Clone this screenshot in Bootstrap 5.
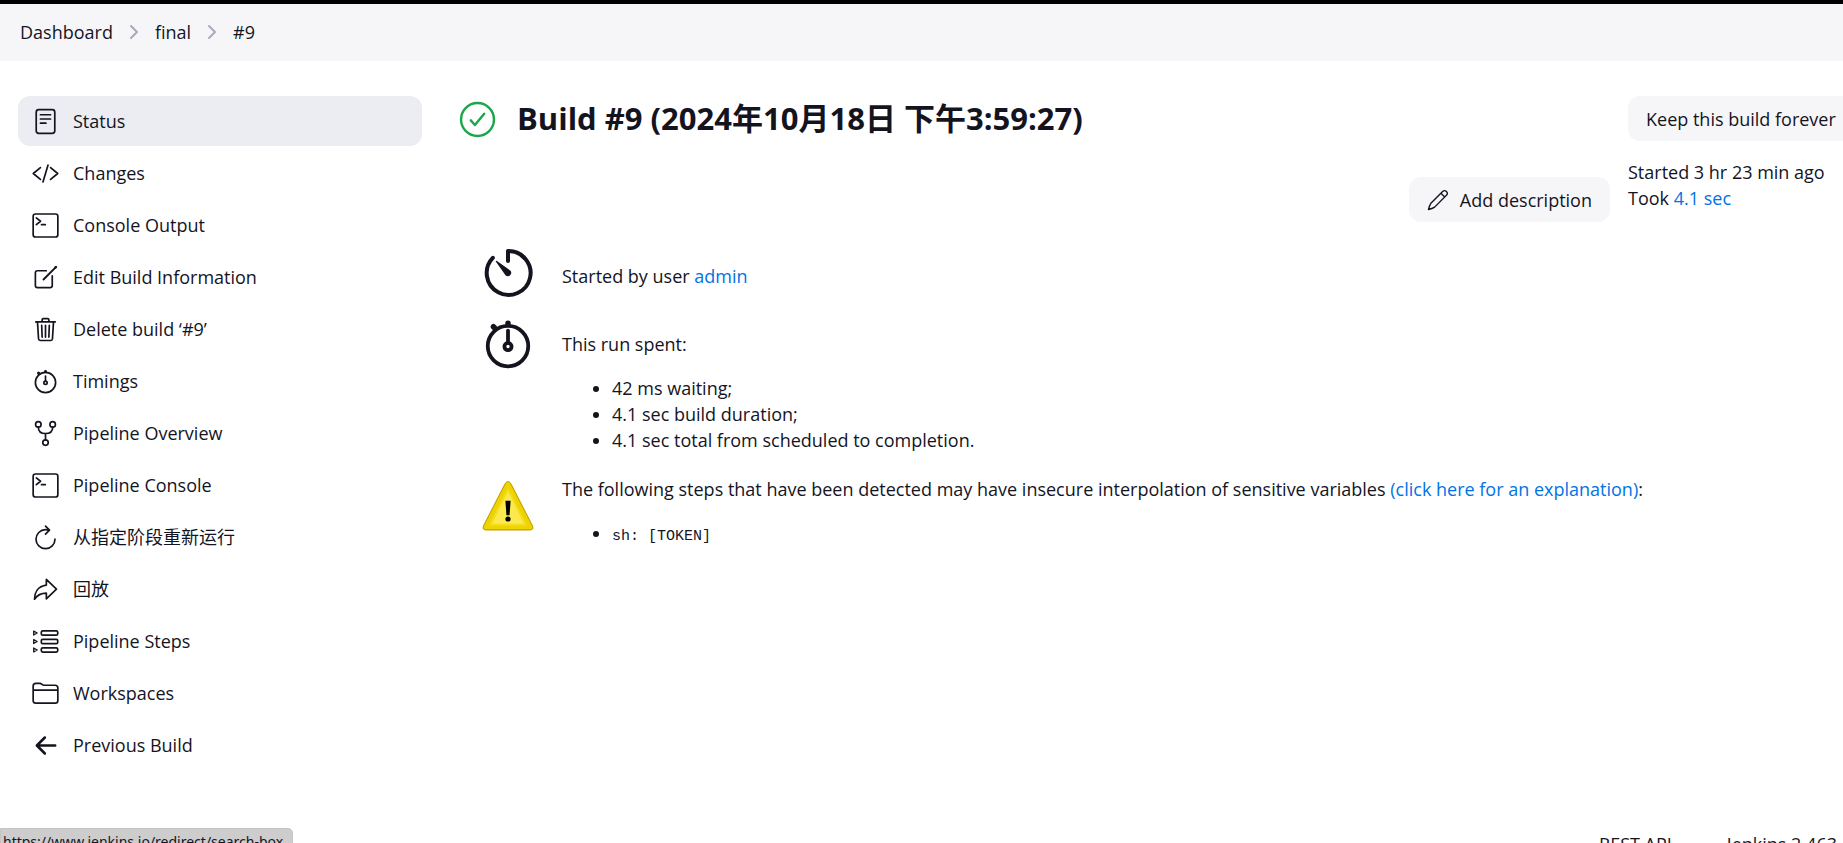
<!DOCTYPE html>
<html lang="en">
<head>
<meta charset="utf-8">
<meta name="viewport" content="width=device-width, initial-scale=1">
<title>final #9 - Jenkins</title>
<link href="https://cdn.jsdelivr.net/npm/bootstrap@5.3.0/dist/css/bootstrap.min.css" rel="stylesheet">
<style>
  :root { --ink: #14141f; --link: #0073e6; --soft: #f6f6f9; }
  body { font-family: "Open Sans", "Noto Sans CJK SC", sans-serif; font-size: 18px; line-height: 26px; color: var(--ink); }
  a { color: var(--link); text-decoration: none; }
  svg { fill: none; stroke: currentColor; stroke-width: 32; stroke-linecap: round; stroke-linejoin: round; flex: none; }
  .crumb-bar { background: var(--soft); border-top: 4px solid #000; height: 61px; padding: 0 20px 2px; }
  .crumb-bar ol { gap: 16px; }
  .crumb-bar a, .side-nav a, footer a { color: var(--ink); }
  .crumb-bar svg { width: 10px; height: 16px; color: #a9a9bb; stroke-width: 2; }
  .page-body { padding: 35px 0 0 18px; gap: 36px; }
  .side-nav { width: 404px; gap: 2px; }
  .side-nav a { height: 50px; padding: 0 14px; gap: 14px; border-radius: 12px; color: var(--ink); }
  .side-nav a.active { background: #ecedf3; }
  .side-nav svg { width: 27px; height: 27px; }
  .build-col { min-width: 0; }
  .build-head { gap: 20px; height: 46px; }
  .build-head svg { width: 39px; height: 39px; color: #1ea64b; }
  h1 { font-size: 31px; font-weight: 700; }
  .soft-btn { background: var(--soft); border: 0; border-radius: 12px; height: 45px; padding: 0 18px; font-size: 18px; color: var(--ink); gap: 11px; }
  .soft-btn svg { width: 22px; height: 22px; }
  .right-col { width: 215px; }
  .started { margin-top: 18px; }
  .desc-row { padding: 35px 18px 0 0; }
  .facts { padding-left: 23px; }
  .facts td { padding: 0; vertical-align: top; }
  .facts td:first-child { padding-right: 27px; }
  .facts svg { width: 54px; height: 54px; display: block; }
  .facts ul { padding-left: 50px; margin: 18px 0 0; }
  .fact-user td { padding-top: 24px; height: 89px; }
  .fact-user td + td { padding-top: 41px; }
  .fact-time td { padding-top: 6px; height: 164px; }
  .fact-time td + td { padding-top: 20px; }
  .fact-warn td { padding-top: 4px; }
  .fact-warn td + td { padding-top: 1px; }
  code { font: 15px/26px "Liberation Mono", monospace; color: var(--ink); }
  footer { padding: 61px 6px 0 0; gap: 55px; }
  .url-hint { bottom: -11px; height: 26px; padding: 0 9px 0 2px; background: #cdcdcd; border: 1px solid #c4c4c4; border-radius: 0 5px 0 0; font: 14px/26px "Noto Sans", sans-serif; }
</style>
</head>
<body class="vh-100 overflow-hidden bg-white">
<header class="crumb-bar d-flex align-items-center">
  <nav aria-label="breadcrumb">
    <ol class="list-unstyled d-flex align-items-center mb-0">
      <li><a href="#">Dashboard</a></li>
      <li class="d-flex" aria-hidden="true"><svg viewBox="0 0 10 16"><path d="M2 2l6 6-6 6"/></svg></li>
      <li><a href="#">final</a></li>
      <li class="d-flex" aria-hidden="true"><svg viewBox="0 0 10 16"><path d="M2 2l6 6-6 6"/></svg></li>
      <li><a href="#">#9</a></li>
    </ol>
  </nav>
</header>

<div class="page-body d-flex">
  <nav class="side-nav d-flex flex-column flex-shrink-0" aria-label="Build">
    <a class="active d-flex align-items-center" href="#"><svg viewBox="0 0 512 512"><rect x="80" y="32" width="352" height="448" rx="48"/><path d="M160 128h192M160 208h192M160 288h104"/></svg>Status</a>
    <a class="d-flex align-items-center" href="#"><svg viewBox="0 0 512 512"><path d="M160 368L24 256l136-112M352 368l136-112-136-112M304 96l-96 320"/></svg>Changes</a>
    <a class="d-flex align-items-center" href="#"><svg viewBox="0 0 512 512"><rect x="22" y="38" width="468" height="436" rx="44"/><path d="M82 112l80 64-80 64M180 240h72"/></svg>Console Output</a>
    <a class="d-flex align-items-center" href="#"><svg viewBox="0 0 512 512"><path d="M384 224v184a40 40 0 01-40 40H104a40 40 0 01-40-40V168a40 40 0 0140-40h167"/><path d="M448 64L218 294" stroke-width="36"/><path d="M446 66l8-8" stroke-width="46"/></svg>Edit Build Information</a>
    <a class="d-flex align-items-center" href="#"><svg viewBox="0 0 512 512"><path d="M104 112l20 320c1 18 14 32 32 32h200c18 0 31-14 32-32l20-320M72 112h368M192 112V72a24 24 0 0124-24h80a24 24 0 0124 24v40M256 176v224M184 176l8 224M328 176l-8 224"/></svg>Delete build ‘#9’</a>
    <a class="d-flex align-items-center" href="#"><svg viewBox="0 0 512 512"><circle cx="256" cy="276" r="192"/><circle cx="256" cy="280" r="32"/><path d="M256 152v96"/><path d="M256 66v4M124 98l4 4" stroke-width="56"/></svg>Timings</a>
    <a class="d-flex align-items-center" href="#"><svg viewBox="0 0 512 512"><circle cx="120" cy="84" r="52"/><circle cx="392" cy="84" r="52"/><circle cx="256" cy="428" r="52"/><path d="M256 256v120M120 136c0 80 54 120 136 120s136-40 136-120"/></svg>Pipeline Overview</a>
    <a class="d-flex align-items-center" href="#"><svg viewBox="0 0 512 512"><rect x="22" y="38" width="468" height="436" rx="44"/><path d="M82 112l80 64-80 64M180 240h72"/></svg>Pipeline Console</a>
    <a class="d-flex align-items-center" href="#"><svg viewBox="0 0 512 512"><path d="M320 116c-20-6-42-8-64-8a180 180 0 10180 180"/><path d="M256 40l76 76-76 76" /></svg>从指定阶段重新运行</a>
    <a class="d-flex align-items-center" href="#"><svg viewBox="0 0 512 512"><path d="M464 250L272 66v106C103 196 48 322 48 440c60-88 130-114 224-114v106z"/></svg>回放</a>
    <a class="d-flex align-items-center" href="#"><svg viewBox="0 0 512 512"><rect x="176" y="56" width="312" height="80" rx="28"/><rect x="176" y="216" width="312" height="80" rx="28"/><rect x="176" y="376" width="312" height="80" rx="28"/><path stroke-width="24" d="M32 58v76l66-38zM32 218v76l66-38zM32 378v76l66-38z"/></svg>Pipeline Steps</a>
    <a class="d-flex align-items-center" href="#"><svg viewBox="0 0 512 512"><path d="M22 180V116a52 52 0 0152-52h76c34 0 44 36 78 36h210a52 52 0 0152 52v236a52 52 0 01-52 52H74a52 52 0 01-52-52V180M22 192h468"/></svg>Workspaces</a>
    <a class="d-flex align-items-center" href="#"><svg viewBox="0 0 512 512"><path stroke-width="48" d="M244 408L92 256l152-152M112 256h328"/></svg>Previous Build</a>
  </nav>

  <main class="d-flex flex-grow-1 build-col">
    <div class="flex-grow-1 build-col">
      <div class="build-head d-flex align-items-center">
        <svg viewBox="0 0 512 512"><circle cx="256" cy="256" r="216"/><path d="M344 180L222 328l-54-60"/></svg>
        <h1 class="mb-0">Build #9 (2024年10月18日 下午3:59:27)</h1>
      </div>
      <div class="desc-row d-flex justify-content-end">
        <button type="button" class="soft-btn d-flex align-items-center"><svg viewBox="0 0 512 512"><path d="M364 60L90 334c-24 36-44 86-56 144 58-12 108-32 144-56l274-274a62 62 0 00-88-88zM324 100l88 88"/></svg>Add description</button>
      </div>
      <table class="facts d-block text-nowrap">
        <tbody>
        <tr class="fact-user">
          <td><svg viewBox="0 0 512 512"><path d="M112 112A208 208 0 1 0 256 48v94" stroke-width="38"/><path d="M234 280l-94-132a6 6 0 018-8l132 94a33 33 0 01-46 46z" fill="currentColor" stroke="none"/></svg></td>
          <td>Started by user <a href="#">admin</a></td>
        </tr>
        <tr class="fact-time">
          <td><svg viewBox="0 0 512 512"><g stroke-width="36"><circle cx="256" cy="276" r="192"/><circle cx="256" cy="280" r="34"/><path d="M256 130v116"/><path d="M256 60v6M118 92l10 10" stroke-width="52"/></g></svg></td>
          <td>This run spent:
            <ul><li>42 ms waiting;</li><li>4.1 sec build duration;</li><li>4.1 sec total from scheduled to completion.</li></ul>
          </td>
        </tr>
        <tr class="fact-warn">
          <td><svg viewBox="0 0 52 52"><defs><filter id="soft"><feGaussianBlur stdDeviation="1"/></filter></defs><path d="M4 50h46" stroke="#999" stroke-width="3" filter="url(#soft)"/><path d="M23 5Q26 0 29 5L49.500 45Q51 49 47 49H5Q1 49 2.500 45z" fill="#edd400" stroke="#c4a000" stroke-width="1"/><path d="M26 10L43 44H9z" fill="#fce94f" stroke="#f3dd1c" stroke-width="2"/><path d="M23.500 21h5l-1 14h-3z" fill="#000" stroke="none"/><circle cx="26" cy="38.500" r="2.500" fill="#000" stroke="none"/></svg></td>
          <td>The following steps that have been detected may have insecure interpolation of sensitive variables <a href="#">(click here for an explanation)</a>:
            <ul><li><code>sh: [TOKEN]</code></li></ul>
          </td>
        </tr>
        </tbody>
      </table>
    </div>
    <div class="right-col flex-shrink-0">
      <button type="button" class="soft-btn text-nowrap">Keep this build forever</button>
      <div class="started text-nowrap">Started 3 hr 23 min ago<br>Took <a href="#">4.1 sec</a></div>
    </div>
  </main>
</div>

<footer class="d-flex justify-content-end">
  <a href="#">REST API</a>
  <a href="#">Jenkins 2.463</a>
</footer>
<div class="url-hint position-fixed start-0">https://www.jenkins.io/redirect/search-box</div>
<script src="https://cdn.jsdelivr.net/npm/bootstrap@5.3.0/dist/js/bootstrap.bundle.min.js"></script>
</body>
</html>
